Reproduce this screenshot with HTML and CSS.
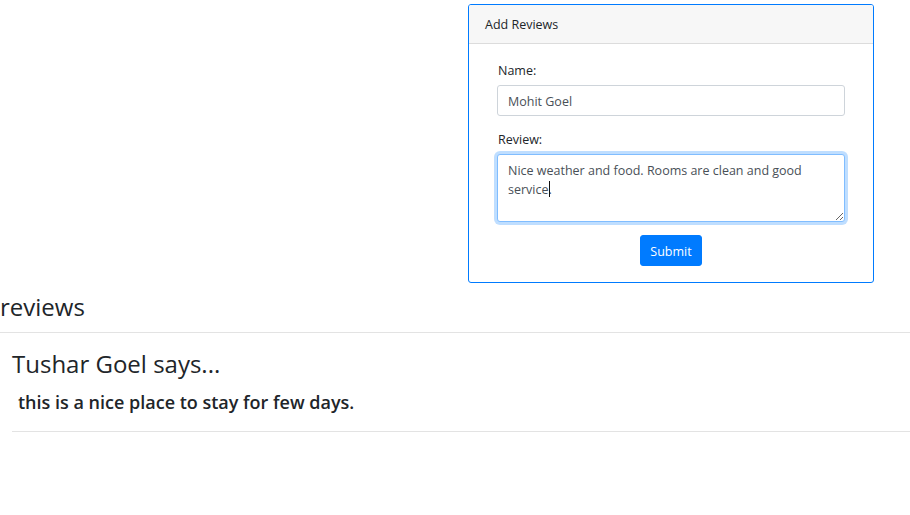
FILE: index.html
```html
<!DOCTYPE html>
<html>
<head>
<meta charset="utf-8">
<link rel="stylesheet" href="styles.css">
</head>
<body>
<div class="top-row">
  <div class="spacer"></div>
  <div class="card">
    <div class="card-header">Add Reviews</div>
    <form class="card-body">
      <div class="form-group">
        <label class="label">Name:</label>
        <input class="input" type="text" value="Mohit Goel">
      </div>
      <div class="form-group">
        <label class="label">Review:</label>
        <div class="textarea-wrap">
          <textarea class="input textarea focused" rows="3">Nice weather and food. Rooms are clean and good service.</textarea>
          <span class="caret"></span>
        </div>
      </div>
      <div class="actions">
        <button class="btn" type="button">Submit</button>
      </div>
    </form>
  </div>
</div>
<h3 class="section-title">reviews</h3>
<hr class="rule">
<div class="review">
  <h4 class="review-author">Tushar Goel says...</h4>
  <h5 class="review-text">this is a nice place to stay for few days.</h5>
  <hr class="rule">
</div>
</body>
</html>
```
FILE: styles.css
```css
* { box-sizing: border-box; }
html, body { margin: 0; padding: 0; background: #fff; }
body {
  font-family: "Open Sans", "Noto Sans", sans-serif;
  color: #212529;
  width: 910px;
  overflow: hidden;
}
.top-row {
  display: flex;
  padding-top: 4px;
}
.spacer { width: 468px; flex: none; }
.card {
  width: 406px;
  flex: none;
  border: 1px solid #007bff;
  border-radius: 3px;
  overflow: hidden;
}
.card-header {
  background: #f7f7f7;
  border-bottom: 1px solid #dcdcdc;
  font-size: 12.5px;
  line-height: 19px;
  padding: 10px 16px 9px 16px;
}
.card-body {
  display: flex;
  flex-direction: column;
  padding: 16px 28px;
  margin: 0;
}
.form-group {
  display: flex;
  flex-direction: column;
  margin-bottom: 13px;
}
.label {
  font-size: 12.5px;
  line-height: 19px;
  padding-top: 1px;
  margin-bottom: 5px;
  padding-left: 1px;
}
.input {
  font-family: inherit;
  font-size: 12.5px;
  line-height: 19px;
  color: #495057;
  height: 31px;
  padding: 6px 10px 4px 10px;
  border: 1px solid #ced4da;
  border-radius: 3px;
  width: 100%;
  margin: 0;
  outline: none;
  background: #fff;
}
.textarea-wrap { position: relative; }
.textarea {
  display: block;
  height: 68px;
  resize: vertical;
}
.textarea.focused {
  border-color: #80bdff;
  box-shadow: 0 0 0 3px rgba(0, 123, 255, 0.25);
}
.caret {
  position: absolute;
  left: 52px;
  top: 27px;
  width: 1px;
  height: 16px;
  background: #111;
}
.actions {
  display: flex;
  justify-content: center;
}
.btn {
  font-family: inherit;
  font-size: 12.5px;
  line-height: 19px;
  color: #fff;
  background: #007bff;
  border: 1px solid #007bff;
  border-radius: 3px;
  height: 31px;
  width: 62px;
  padding: 1px 0 0 0;
}
.section-title {
  font-size: 24px;
  font-weight: 500;
  line-height: 28px;
  margin: 10px 0 0 0;
}
.rule {
  border: 0;
  border-top: 1px solid #e3e3e3;
  margin: 0;
}
.section-title + .rule { margin-top: 11px; }
.review {
  margin-left: 12px;
  padding-top: 16px;
}
.review-author {
  font-size: 24px;
  font-weight: 500;
  line-height: 29px;
  margin: 0 0 13px 0;
}
.review-text {
  font-size: 18px;
  font-weight: 600;
  line-height: 22px;
  margin: 0 0 18px 0;
  padding-left: 6px;
}
```
